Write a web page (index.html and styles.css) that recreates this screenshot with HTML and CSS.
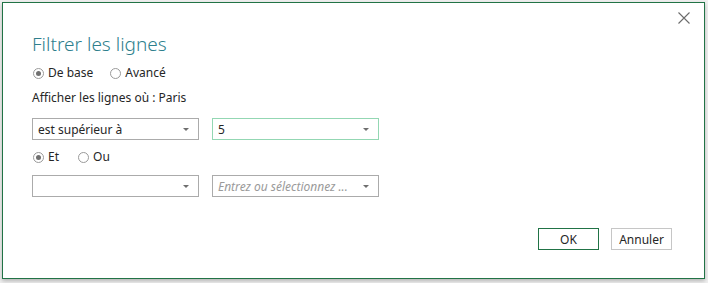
FILE: index.html
```html
<!DOCTYPE html>
<html lang="fr">
<head>
    <meta charset="UTF-8">
    <title>Filtrer les lignes</title>
    <link rel="stylesheet" href="styles.css">
</head>
<body>

    <!-- Dialog -->
    <div class="dialog">
        <button class="close-btn" aria-label="Fermer">
            <svg width="12" height="12" viewBox="0 0 12 12">
                <path d="M0.5 0.5 L11.5 11.5 M11.5 0.5 L0.5 11.5" stroke="#6b6b6b" stroke-width="1.1" fill="none"/>
            </svg>
        </button>

        <h1 class="title">Filtrer les lignes</h1>

        <div class="radios">
            <label class="radio checked"><span class="dot"></span>De base</label>
            <label class="radio"><span class="dot"></span>Avancé</label>
        </div>

        <p class="caption">Afficher les lignes où : Paris</p>

        <div class="row first">
            <div class="combo"><span class="value">est supérieur à</span><span class="arrow"></span></div>
            <div class="combo active"><span class="value">5</span><span class="arrow"></span></div>
        </div>

        <div class="radios second">
            <label class="radio checked"><span class="dot"></span>Et</label>
            <label class="radio"><span class="dot"></span>Ou</label>
        </div>

        <div class="row">
            <div class="combo"><span class="value"></span><span class="arrow"></span></div>
            <div class="combo"><span class="value placeholder">Entrez ou sélectionnez ...</span><span class="arrow"></span></div>
        </div>

        <div class="actions">
            <button class="btn primary">OK</button>
            <button class="btn">Annuler</button>
        </div>
    </div>

</body>
</html>
```

FILE: styles.css
```css
/* General */
body {
    margin: 0;
    padding: 2px 3px 0 2px;
    background: #f0f0f0;
    font-family: "Noto Sans", "Open Sans", sans-serif;
    font-size: 12px;
    color: #262626;
    height: 283px;
    box-sizing: border-box;
    overflow: hidden;
}

/* Dialog box */
.dialog {
    position: relative;
    height: 277px;
    box-sizing: border-box;
    background: #fff;
    border: 1px solid #217346;
    box-shadow: 0 2px 4px rgba(0, 0, 0, 0.25);
    padding: 27px 29px 0;
}

.close-btn {
    position: absolute;
    top: 7px;
    right: 12px;
    width: 16px;
    height: 16px;
    padding: 2px;
    border: none;
    background: none;
}

/* Title */
.title {
    margin: 0;
    font-size: 19px;
    font-weight: 300;
    line-height: 28px;
    color: #2e7f8d;
}

/* Radio groups */
.radios {
    display: flex;
    gap: 16px;
    height: 20px;
    margin-top: 5px;
    align-items: center;
}

.radios.second {
    margin-top: 7px;
    gap: 18px;
}

.radio {
    display: flex;
    align-items: center;
    gap: 4px;
    line-height: 20px;
}

.dot {
    width: 9px;
    height: 9px;
    border: 1px solid #9a9a9a;
    border-radius: 50%;
    margin-left: 1px;
    position: relative;
    background: #fff;
}

.radio.checked .dot::after {
    content: "";
    position: absolute;
    left: 2px;
    top: 2px;
    width: 5px;
    height: 5px;
    border-radius: 50%;
    background: #707070;
}

/* Caption */
.caption {
    margin: 5px 0 0;
    line-height: 20px;
}

/* Combo boxes */
.row {
    display: flex;
    gap: 13px;
    margin-top: 8px;
}

.row.first {
    margin-top: 10px;
}

.combo {
    width: 167px;
    height: 22px;
    box-sizing: border-box;
    border: 1px solid #ababab;
    display: flex;
    align-items: center;
    padding: 0 9px 0 5px;
}

.combo.active {
    border-color: #93d7b3;
}

.value {
    flex: 1;
}

.placeholder {
    font-style: italic;
    color: #9a9a9a;
}

.arrow {
    width: 0;
    height: 0;
    border-left: 3px solid transparent;
    border-right: 3px solid transparent;
    border-top: 3px solid #6e6e6e;
}

/* Buttons */
.actions {
    display: flex;
    justify-content: flex-end;
    gap: 12px;
    margin-top: 31px;
    padding-right: 3px;
}

.btn {
    width: 61px;
    height: 22px;
    box-sizing: border-box;
    border: 1px solid #c6c6c6;
    background: #fff;
    font-family: inherit;
    font-size: 12px;
    color: #262626;
    padding: 0;
}

.btn.primary {
    border-color: #217346;
}
```
